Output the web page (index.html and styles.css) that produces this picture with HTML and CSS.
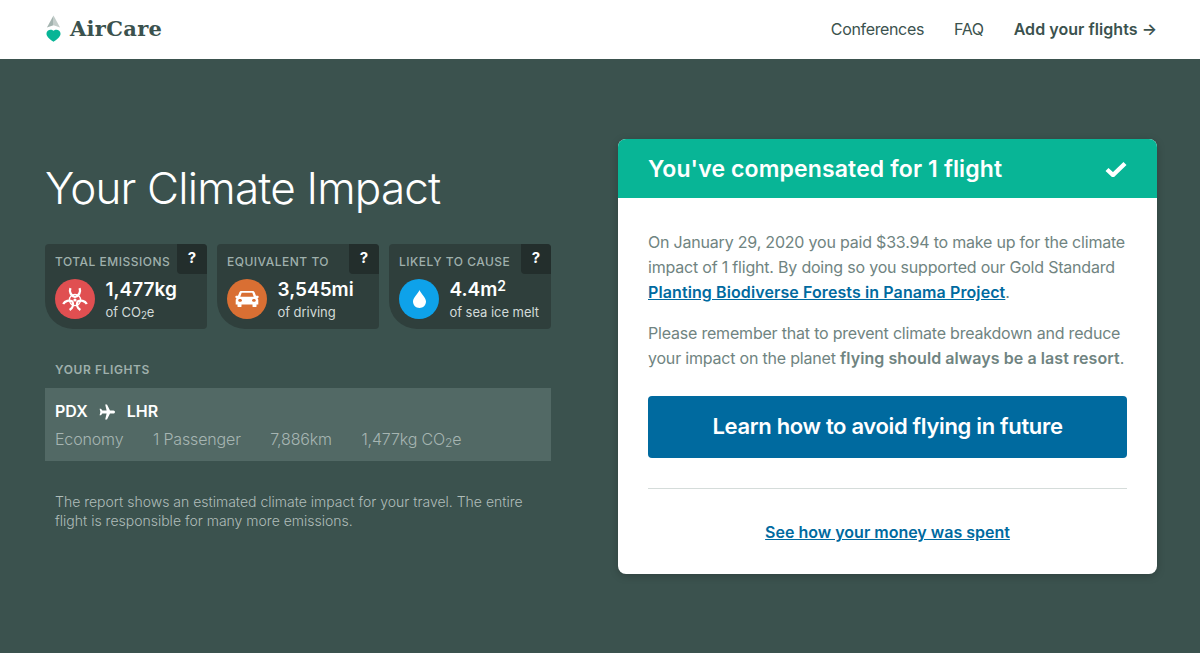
FILE: index.html
```html
<!DOCTYPE html>
<html lang="en">
<head>
    <meta charset="UTF-8">
    <meta name="viewport" content="width=device-width, initial-scale=1.0">
    <title>AirCare - Your Climate Impact</title>
    <link rel="stylesheet" href="styles.css">
</head>
<body>
    <header class="site-header">
        <a class="logo" href="#">
            <svg class="logo-mark" width="15" height="27" viewBox="0 0 16 28">
                <path d="M8 0 L15 13 L8 10.5 Z" fill="#c3cdca"/>
                <path d="M8 0 L1 13 L8 10.5 Z" fill="#a3b3af"/>
                <path d="M8 16.5 C9.5 14.5 15.5 14.5 15.5 19.5 C15.5 23 11 26 8 28 C5 26 .5 23 .5 19.5 C.5 14.5 6.5 14.5 8 16.5 Z" fill="#08b596"/>
            </svg>
            <span class="logo-text">AirCare</span>
        </a>
        <nav class="site-nav">
            <a href="#">Conferences</a>
            <a href="#">FAQ</a>
            <a class="nav-cta" href="#">Add your flights →</a>
        </nav>
    </header>

    <main class="impact">
        <section class="summary">
            <h1>Your Climate Impact</h1>

            <div class="stats">
                <div class="stat">
                    <div class="stat-label">Total emissions</div>
                    <span class="stat-help">?</span>
                    <div class="stat-body">
                        <span class="stat-icon icon-red">
                            <svg width="26" height="24" viewBox="0 0 26 24" fill="none" stroke="#fff">
                                <circle cx="13" cy="13" r="1.6" fill="#fff" stroke="none"/>
                                <circle cx="13" cy="13" r="5.6" stroke-width="1.3"/>
                                <path d="M8.4 1.2 A6.6 6.6 0 0 0 13 10 A6.6 6.6 0 0 0 17.6 1.2" stroke-width="2.3"/>
                                <path d="M1.2 17 A6.6 6.6 0 0 1 10.4 14.6 A6.6 6.6 0 0 1 7.6 23" stroke-width="2.3"/>
                                <path d="M24.8 17 A6.6 6.6 0 0 0 15.6 14.6 A6.6 6.6 0 0 0 18.4 23" stroke-width="2.3"/>
                            </svg>
                        </span>
                        <div class="stat-text">
                            <div class="stat-value">1,477kg</div>
                            <div class="stat-note">of CO<sub>2</sub>e</div>
                        </div>
                    </div>
                </div>
                <div class="stat">
                    <div class="stat-label">Equivalent to</div>
                    <span class="stat-help">?</span>
                    <div class="stat-body">
                        <span class="stat-icon icon-orange">
                            <svg width="24" height="18" viewBox="0 0 24 20" preserveAspectRatio="none" fill="#fff">
                                <path fill-rule="evenodd" d="M6.5 1 H17.5 C18.5 1 19.2 1.5 19.6 2.5 L21 6.5 H22.5 C23.3 6.5 23.8 7.2 23.6 7.9 L23.3 8.8 L22.4 9 C23 9.7 23.3 10.5 23.3 11.4 V16 H21.5 V18 C21.5 18.7 21 19 20.5 19 H18.5 C18 19 17.5 18.7 17.5 18 V16 H6.5 V18 C6.5 18.7 6 19 5.5 19 H3.5 C3 19 2.5 18.7 2.5 18 V16 H.7 V11.4 C.7 10.5 1 9.7 1.6 9 L.7 8.8 L.4 7.9 C.2 7.2 .7 6.5 1.5 6.5 H3 L4.4 2.5 C4.8 1.5 5.5 1 6.5 1 Z M6.7 3 L5.3 7.5 H18.7 L17.3 3 Z M5 10 C3.9 10 3.2 10.7 3.2 11.6 C3.2 12.5 3.9 13 5 13 C6.1 13 7 12.5 7 11.6 C7 10.7 6.1 10 5 10 Z M19 10 C17.9 10 17 10.7 17 11.6 C17 12.5 17.9 13 19 13 C20.1 13 20.8 12.5 20.8 11.6 C20.8 10.7 20.1 10 19 10 Z"/>
                            </svg>
                        </span>
                        <div class="stat-text">
                            <div class="stat-value">3,545mi</div>
                            <div class="stat-note">of driving</div>
                        </div>
                    </div>
                </div>
                <div class="stat">
                    <div class="stat-label">Likely to cause</div>
                    <span class="stat-help">?</span>
                    <div class="stat-body">
                        <span class="stat-icon icon-blue">
                            <svg width="13" height="18" viewBox="0 0 13 18" fill="#fff">
                                <path d="M6.5 0 C7.5 3 13 7.5 13 11.5 C13 15.2 10 18 6.5 18 C3 18 0 15.2 0 11.5 C0 7.5 5.5 3 6.5 0 Z"/>
                            </svg>
                        </span>
                        <div class="stat-text">
                            <div class="stat-value">4.4m<sup>2</sup></div>
                            <div class="stat-note">of sea ice melt</div>
                        </div>
                    </div>
                </div>
            </div>

            <h2 class="flights-title">Your flights</h2>
            <div class="flight">
                <div class="flight-route">
                    <span>PDX</span>
                    <svg width="16" height="16" viewBox="0 0 16 16" fill="#fff">
                        <path d="M6.2 .5 H8 L11 6.4 H14.4 C15.4 6.4 16 7.2 16 8 C16 8.8 15.4 9.6 14.4 9.6 H11 L8 15.5 H6.2 L7.6 9.6 H3.4 L2 11.2 H.6 L1.4 8 L.6 4.8 H2 L3.4 6.4 H7.6 Z"/>
                    </svg>
                    <span>LHR</span>
                </div>
                <div class="flight-meta">
                    <span>Economy</span>
                    <span>1 Passenger</span>
                    <span>7,886km</span>
                    <span>1,477kg CO<sub>2</sub>e</span>
                </div>
            </div>

            <p class="disclaimer">The report shows an estimated climate impact for your travel. The entire flight is responsible for many more emissions.</p>
        </section>

        <section class="card">
            <div class="card-head">
                <span>You've compensated for 1 flight</span>
                <svg width="22" height="16" viewBox="0 0 22 16" fill="none" stroke="#fff" stroke-width="4.4">
                    <path d="M2 8.5 L8 14 L20 2.5"/>
                </svg>
            </div>
            <div class="card-body">
                <p>On January 29, 2020 you paid $33.94 to make up for the climate impact of 1 flight. By doing so you supported our Gold Standard <a href="#">Planting Biodiverse Forests in Panama Project</a>.</p>
                <p>Please remember that to prevent climate breakdown and reduce your impact on the planet <strong>flying should always be a last resort</strong>.</p>
                <a class="button-primary" href="#">Learn how to avoid flying in future</a>
                <hr>
                <a class="spent-link" href="#">See how your money was spent</a>
            </div>
        </section>
    </main>
</body>
</html>
```

FILE: styles.css
```css
html, body {
    margin: 0;
    height: 100%;
}
body {
    font-family: Inter, "Noto Sans", sans-serif;
    background-color: #3b524e;
    display: flex;
    flex-direction: column;
    overflow: hidden;
}
a {
    color: inherit;
    text-decoration: none;
}

.site-header {
    display: flex;
    justify-content: space-between;
    align-items: center;
    height: 57px;
    padding: 0 43px 2px 45px;
    background-color: #fff;
}
.logo {
    display: flex;
    align-items: center;
    gap: 9px;
}
.logo-mark {
    margin-left: 1px;
}
.logo-text {
    font-family: "DejaVu Serif", serif;
    font-weight: 700;
    font-size: 21px;
    letter-spacing: 0.3px;
    color: #3b524e;
}
.site-nav {
    display: flex;
    gap: 30px;
    font-size: 16px;
    letter-spacing: -0.35px;
    color: #3b524e;
}
.nav-cta {
    font-weight: 600;
    letter-spacing: 0.05px;
}

.impact {
    flex: 1;
    display: flex;
    justify-content: space-between;
    align-items: flex-start;
    padding: 80px 43px 0 45px;
}

.summary {
    width: 506px;
}
h1 {
    margin: 20px 0 27px;
    font-size: 44px;
    line-height: 58px;
    font-weight: 300;
    letter-spacing: -0.8px;
    color: #fff;
}

.stats {
    display: flex;
    gap: 10px;
}
.stat {
    position: relative;
    width: 162px;
    height: 85px;
    box-sizing: border-box;
    padding: 10px 10px 0;
    background-color: #2f3f3c;
    border-radius: 4px 4px 4px 28px;
}
.stat-label {
    font-size: 12px;
    line-height: 15px;
    font-weight: 500;
    letter-spacing: 0.5px;
    text-transform: uppercase;
    color: #9fb0ac;
}
.stat-help {
    position: absolute;
    top: 0;
    right: 0;
    width: 30px;
    height: 30px;
    background-color: #232e2c;
    border-radius: 0 4px 0 4px;
    color: #fff;
    font-size: 15px;
    font-weight: 700;
    line-height: 28px;
    text-align: center;
}
.stat-body {
    display: flex;
    align-items: center;
    gap: 10.5px;
    margin-top: 7px;
}
.stat-icon {
    flex: none;
    display: flex;
    align-items: center;
    justify-content: center;
    width: 40px;
    height: 40px;
    border-radius: 50%;
}
.icon-red { background-color: #e04f51; }
.icon-orange { background-color: #d96f33; }
.icon-blue { background-color: #0ea2ea; }
.stat-text {
    padding-top: 2px;
    white-space: nowrap;
}
.stat-value {
    font-size: 19px;
    line-height: 24px;
    font-weight: 600;
    color: #fff;
}
.stat-value sup {
    font-size: 14px;
    line-height: 0;
    vertical-align: 5px;
}
.stat-note {
    font-size: 13px;
    line-height: 20px;
    letter-spacing: -0.05px;
    color: #d3dbd9;
}
sub {
    font-size: 0.75em;
    line-height: 0;
    vertical-align: -2px;
}

.flights-title {
    margin: 33px 0 11px 10px;
    font-size: 12px;
    line-height: 15px;
    font-weight: 600;
    letter-spacing: 0.6px;
    text-transform: uppercase;
    color: #9fb0ac;
}
.flight {
    height: 73px;
    box-sizing: border-box;
    padding: 13px 10px 0;
    background-color: #526965;
}
.flight-route {
    display: flex;
    align-items: center;
    gap: 11.5px;
    font-size: 16px;
    line-height: 21px;
    font-weight: 600;
    color: #fff;
}
.flight-meta {
    display: flex;
    gap: 29.5px;
    margin-top: 7px;
    font-size: 16px;
    line-height: 20px;
    font-weight: 300;
    letter-spacing: -0.15px;
    color: #a6b5b2;
}

.disclaimer {
    margin: 31px 20px 0 10px;
    font-size: 14px;
    line-height: 19px;
    font-weight: 300;
    color: #b0bdba;
}

.card {
    width: 539px;
    height: 435px;
    background-color: #fff;
    border-radius: 8px;
    overflow: hidden;
    box-shadow: 0 2px 8px rgba(0, 0, 0, 0.2);
}
.card-head {
    display: flex;
    justify-content: space-between;
    align-items: center;
    height: 59px;
    padding: 0 30px;
    background-color: #08b596;
    color: #fff;
    font-size: 23px;
    font-weight: 600;
    letter-spacing: 0.13px;
}
.card-body {
    padding: 32px 30px 0;
    font-size: 16px;
    line-height: 25px;
    font-weight: 400;
    letter-spacing: -0.2px;
    color: #708481;
}
.card-body p {
    margin: 0 0 16px;
}
.card-body p a {
    color: #006a9f;
    font-weight: 600;
    letter-spacing: 0.1px;
    text-decoration: underline;
}
.card-body strong {
    font-weight: 600;
    letter-spacing: 0.07px;
}
.button-primary {
    display: block;
    height: 62px;
    margin-top: 25px;
    background-color: #006a9f;
    border-radius: 4px;
    color: #fff;
    font-size: 22px;
    font-weight: 600;
    letter-spacing: -0.33px;
    line-height: 60px;
    text-align: center;
}
.card-body hr {
    height: 1px;
    margin: 30px 0 31px;
    border: 0;
    background-color: #d5dcda;
}
.spent-link {
    display: block;
    color: #006a9f;
    font-weight: 600;
    letter-spacing: 0;
    text-align: center;
    text-decoration: underline;
}
```
